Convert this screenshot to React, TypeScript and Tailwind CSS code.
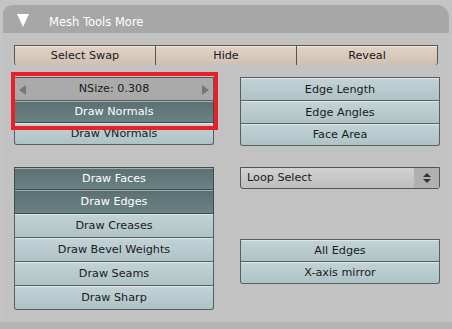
import React from 'react'

const font = { fontFamily: '"DejaVu Sans", Verdana, sans-serif' }

type Kind = 'light' | 'dark' | 'tan'

function Btn({ label, kind = 'light', h = 'h-[23px]', cls = '' }: { label: string; kind?: Kind; h?: string; cls?: string }) {
  const k =
    kind === 'dark'
      ? 'bg-gradient-to-b from-[#5a6f71] to-[#6b8385] text-white border-[#3f4c4d]'
      : kind === 'tan'
        ? 'bg-gradient-to-b from-[#e0d3c6] to-[#cfc0b2] text-[#1a1a1a] border-[#5a5550]'
        : 'bg-gradient-to-b from-[#c3d3d6] to-[#aec3c6] text-[#1a1a1a] border-[#58605f]'
  return (
    <div className={`flex items-center justify-center border-x border-b shadow-[inset_0_1px_0_rgba(255,255,255,0.45)] text-[11.2px] leading-none pt-[1px] ${h} ${k} ${cls}`}>
      {label}
    </div>
  )
}

export default function App() {
  return (
    <div className="w-[452px] h-[329px] bg-[#b4b4b4] relative" style={font}>
      <div className="absolute inset-x-0 top-0 h-[322px] bg-[#c4c4c4]" />
      <div className="relative ml-[3px] pt-[5px] w-[446px]">
        <div className="h-[28px] bg-[#a7a7a7] rounded-tl-[9px] rounded-tr-[12px] flex items-center">
          <svg width="12" height="13" viewBox="0 0 12 13" className="ml-[14px] mt-[2px]">
            <polygon points="0,0 12,0 6,13" fill="#ffffff" />
          </svg>
          <span className="ml-[20px] text-white text-[11.5px] mt-[7px]">Mesh Tools More</span>
        </div>
        <div className="h-[289px] bg-[#c2c2c2] pl-[11px] pt-[12px]">
          <div className="flex w-[424px] h-[20px] border-t border-[#5a5550] rounded-b-[3px] overflow-hidden">
            <Btn label="Select Swap" kind="tan" h="h-[20px]" cls="w-[141px] border-r-0 rounded-bl-[3px]" />
            <Btn label="Hide" kind="tan" h="h-[20px]" cls="w-[142px]" />
            <Btn label="Reveal" kind="tan" h="h-[20px]" cls="w-[141px] border-l-0 rounded-br-[3px]" />
          </div>

          <div className="flex gap-[26px] mt-[12px]">
            <div className="w-[200px] relative">
              <div className="h-[24px] bg-[#aaaaaa] border border-[#5a5a5a] flex items-center justify-between px-[4px] text-[11.2px] pt-[1px] text-[#1a1a1a]">
                <svg width="7" height="10" viewBox="0 0 7 10"><polygon points="7,0 7,10 0,5" fill="#777777" /></svg>
                <span>NSize: 0.308</span>
                <svg width="7" height="10" viewBox="0 0 7 10"><polygon points="0,0 0,10 7,5" fill="#777777" /></svg>
              </div>
              <Btn label="Draw Normals" kind="dark" h="h-[22px]" />
              <Btn label="Draw VNormals" h="h-[22px]" cls="rounded-b-[3px]" />
              <div className="absolute left-[-3px] top-[-5px] w-[207px] h-[58px] border-[4px] border-[#e8202a]" />
            </div>
            <div className="w-[200px]">
              <Btn label="Edge Length" h="h-[24px]" cls="border-t" />
              <Btn label="Edge Angles" />
              <Btn label="Face Area" h="h-[22px]" cls="rounded-b-[3px]" />
            </div>
          </div>

          <div className="flex gap-[26px] mt-[21px]">
            <div className="w-[200px] flex flex-col">
              <Btn label="Draw Faces" kind="dark" cls="border-t" />
              <Btn label="Draw Edges" kind="dark" h="h-[24px]" />
              <Btn label="Draw Creases" h="h-[24px]" />
              <Btn label="Draw Bevel Weights" h="h-[24px]" />
              <Btn label="Draw Seams" h="h-[24px]" />
              <Btn label="Draw Sharp" h="h-[24px]" cls="rounded-b-[3px]" />
            </div>
            <div className="w-[200px] flex flex-col">
              <div className="h-[22px] border border-[#555555] rounded-b-[3px] flex overflow-hidden bg-gradient-to-b from-[#d2d2d2] to-[#bdbdbd]">
                <span className="flex-1 flex items-center pl-[6px] pt-[1px] text-[11.2px] text-[#1a1a1a]">Loop Select</span>
                <div className="w-[25px] bg-[#b0b0b0] flex items-center justify-center">
                  <svg width="10" height="12" viewBox="0 0 10 12">
                    <polygon points="1,5 9,5 5,1" fill="#333333" />
                    <polygon points="1,7 9,7 5,11" fill="#333333" />
                  </svg>
                </div>
              </div>
              <div className="mt-[50px]">
                <Btn label="All Edges" cls="border-t" />
                <Btn label="X-axis mirror" h="h-[22px]" cls="rounded-b-[3px]" />
              </div>
            </div>
          </div>
        </div>
      </div>
    </div>
  )
}
